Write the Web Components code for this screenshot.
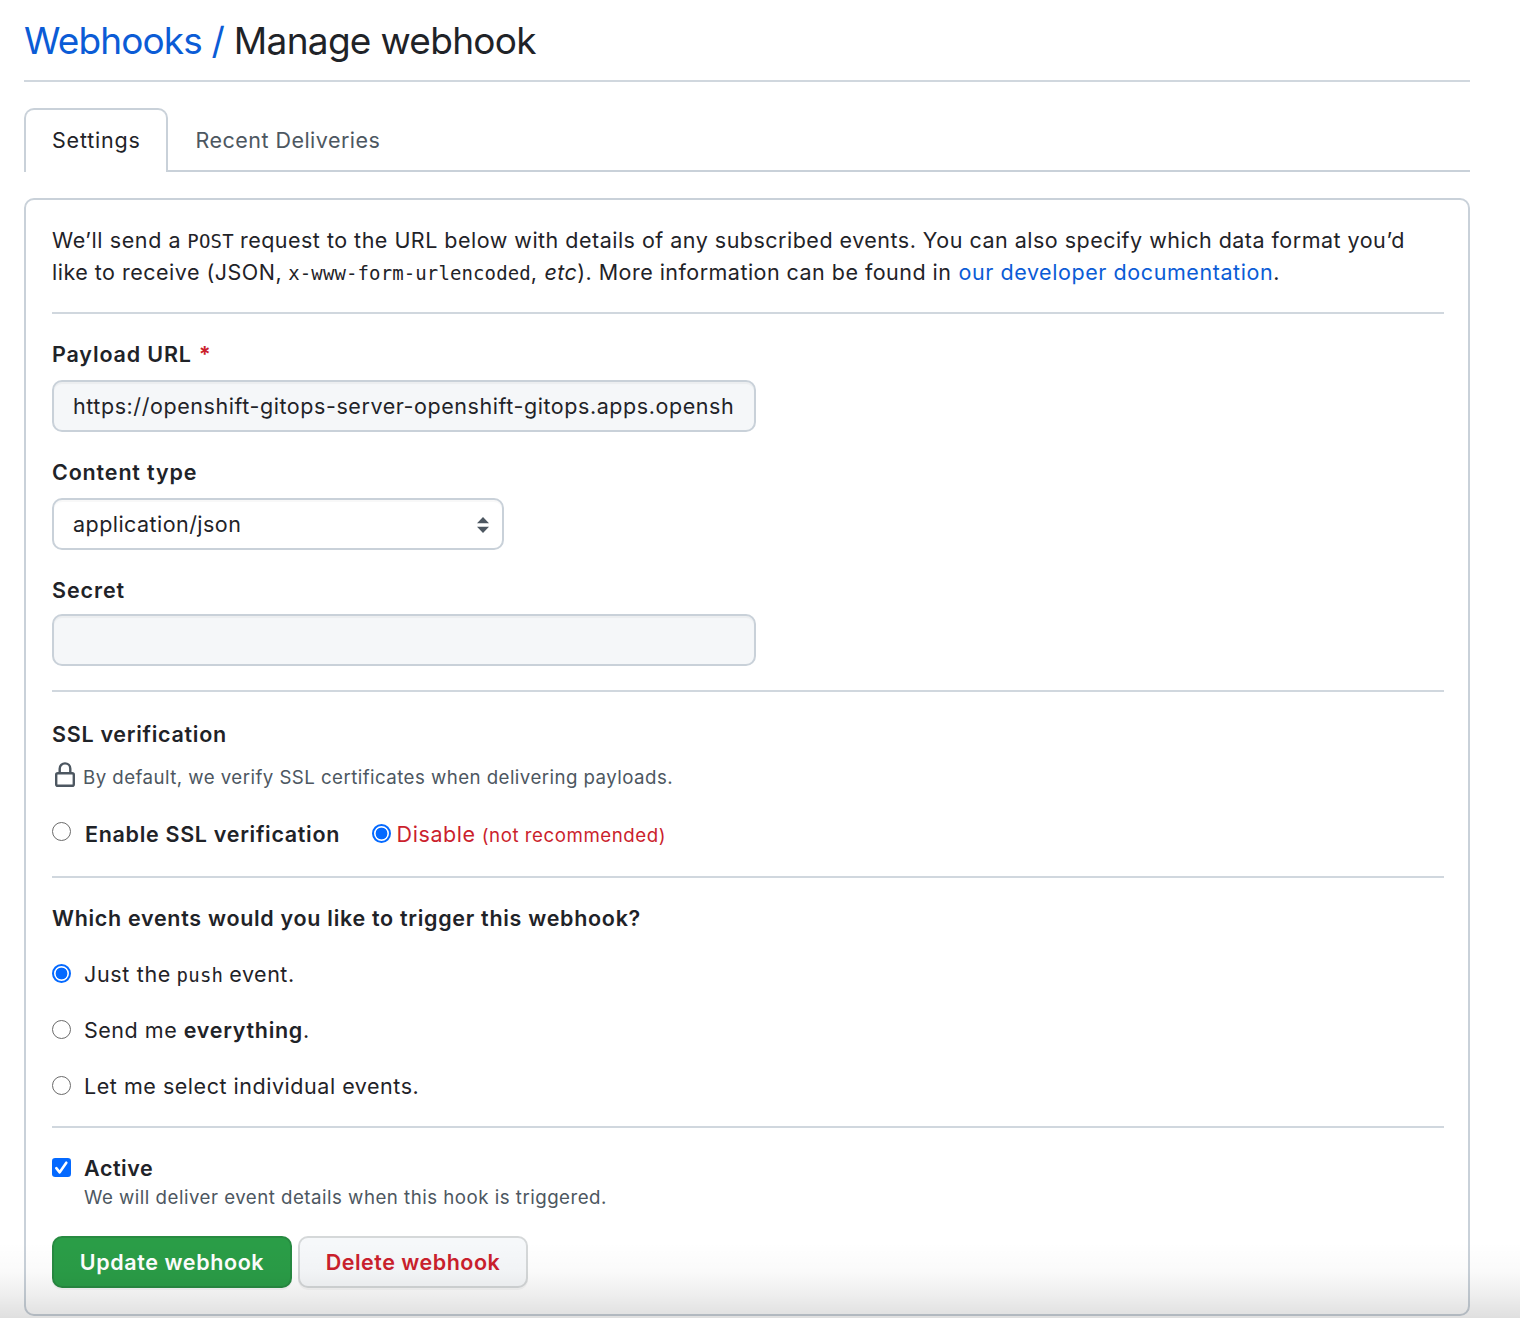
<!DOCTYPE html>
<html lang="en"><head><meta charset="utf-8"><title>Manage webhook</title>
<style>
html,body{margin:0;padding:0;background:#fff}
body{height:1318px;overflow:hidden;font:21.5px/32px Inter,"Liberation Sans",sans-serif;color:#1f2328;font-kerning:normal}
code{font:19px/1 "DejaVu Sans Mono",monospace}
a{color:#0b5cd6;text-decoration:none}
b{font-weight:600}
</style></head><body>
<webhook-page>
 <page-title><a slot="parent" href="#"><text-run track="-0.88">Webhooks /</text-run></a><text-run track="-0.7">Manage webhook</text-run></page-title>
 <tab-bar><tab-item selected><text-run track="0.79">Settings</text-run></tab-item><tab-item><text-run track="0.469">Recent Deliveries</text-run></tab-item></tab-bar>
 <settings-box>
  <intro-text>
   <div><text-run track="0.6">We’ll send a</text-run> <code><text-run track="0.2">POST</text-run></code> <text-run track="0.485">request to the URL below with details of any subscribed events. You can also specify which data format you’d</text-run></div>
   <div><text-run track="0.492">like to receive (JSON,</text-run> <code><text-run track="0.111">x-www-form-urlencoded</text-run></code>, <i style="margin-left:1.5px"><text-run track="0.389">etc</text-run></i><text-run track="0.465">). More information can be found in</text-run> <a href="#" style="margin-left:1px"><text-run track="0.57">our developer documentation</text-run></a>.</div>
  </intro-text>
  <rule-line></rule-line>
  <form-field style="--top:24px;--gap:10px"><text-run slot="label" track="0.85">Payload URL</text-run><span slot="label" style="color:#cb1f2d;font-weight:700;margin-left:7px">*</span><text-box><text-run track="0.566">https://openshift-gitops-server-openshift-gitops.apps.opensh</text-run></text-box></form-field>
  <form-field style="--top:24px;--gap:10px"><text-run slot="label" track="0.84">Content type</text-run><select-box><text-run track="0.45">application/json</text-run></select-box></form-field>
  <form-field style="--top:24px;--gap:8px"><text-run slot="label" track="0.9">Secret</text-run><text-box></text-box></form-field>
  <rule-line></rule-line>
  <form-field style="--top:26px;--gap:11px"><text-run slot="label" track="0.71">SSL verification</text-run><lock-note><text-run track="0.44">By default, we verify SSL certificates when delivering payloads.</text-run></lock-note></form-field>
  <ssl-choices>
   <radio-option style="--space:14px;--lift:-5px"><b><text-run track="0.69">Enable SSL verification</text-run></b></radio-option>
   <radio-option checked style="--space:6px;--drop:1px;color:#cb1f2d"><text-run track="0.581">Disable</text-run> <small style="font-size:18.7px"><text-run track="0.538">(not recommended)</text-run></small></radio-option>
  </ssl-choices>
  <rule-line></rule-line>
  <form-field style="--top:24px;--gap:24px"><text-run slot="label" track="0.7">Which events would you like to trigger this webhook?</text-run>
   <option-list>
   <radio-option checked><text-run track="0.66">Just the</text-run> <code style="margin-left:-.5px"><text-run track="0.25">push</text-run></code> <text-run track="0.5">event.</text-run></radio-option>
   <radio-option><text-run track="0.52">Send me</text-run> <b style="margin-left:.5px"><text-run track="0.7">everything</text-run></b>.</radio-option>
   <radio-option><text-run track="0.53">Let me select individual events.</text-run></radio-option>
   </option-list></form-field>
  <rule-line></rule-line>
  <active-toggle><text-run track="0.56">Active</text-run><text-run slot="note" track="0.483">We will deliver event details when this hook is triggered.</text-run></active-toggle>
  <button-row><push-button primary style="width:240px"><text-run track="0.6">Update webhook</text-run></push-button><push-button style="width:230px"><text-run track="0.5">Delete webhook</text-run></push-button></button-row>
 </settings-box>
</webhook-page>
<script>
const define=(name,css,html)=>customElements.define(name,class extends HTMLElement{
 constructor(){super();this.attachShadow({mode:'open'}).innerHTML=`<style>:host{display:block;box-sizing:border-box}${css}</style>${html}`;}
});
define('webhook-page',`:host{height:1318px;padding:0 50px 0 24px;position:relative}
.fade{position:absolute;left:0;right:0;bottom:0;height:76px;pointer-events:none;background:linear-gradient(rgba(0,0,0,0),rgba(0,0,0,.018) 38%,rgba(0,0,0,.065) 70%,rgba(0,0,0,.125))}`,`<slot></slot><div class="fade"></div>`);
define('page-title',`:host{height:82px;border-bottom:2px solid #d0d7de;font-size:37px;line-height:81px}h1{font:inherit;margin:0;display:flex;gap:10px}`,`<h1><slot name="parent"></slot><slot></slot></h1>`);
define('tab-bar',`:host{display:flex;margin-top:26px;height:64px;box-shadow:inset 0 -2px #c9d1d9}`,`<slot></slot>`);
define('tab-item',`:host{padding:2px 28px 0 27.5px;line-height:60px;color:#4d5761}:host([selected]){width:144px;padding:0 0 0 26px;color:#1f2328;background:#fff;border:2px solid #c9d1d9;border-bottom:0;border-radius:10px 10px 0 0}`,`<slot></slot>`);
define('settings-box',`:host{margin-top:26px;height:1118px;border:2px solid #c9d1d9;border-radius:10px;padding:24px 24px 0 26px}`,`<slot></slot>`);
define('intro-text',`:host{height:64px;white-space:nowrap}`,`<slot></slot>`);
define('rule-line',`:host{height:2px;background:#d0d7de;margin-top:24px}`,``);
define('form-field',`:host{padding-top:var(--top)}.l{font-weight:600;height:32px;margin-bottom:var(--gap)}`,`<div class="l"><slot name="label"></slot></div><slot></slot>`);
define('text-box',`:host{width:704px;height:52px;border:2px solid #c9d1d9;border-radius:10px;background:#f5f7f9;box-shadow:inset 0 2px 1px rgba(27,31,36,.04);padding:0 19px;line-height:48px;white-space:nowrap}`,`<slot></slot>`);
define('select-box',`:host{display:flex;justify-content:space-between;align-items:center;width:452px;height:52px;border:2px solid #c9d1d9;border-radius:10px;background:#fff;box-shadow:inset 0 2px 1px rgba(27,31,36,.03);padding:0 13px 0 19px;line-height:48px}svg{display:block;margin-top:2px}`,`<slot></slot><svg width="12" height="16" viewBox="0 0 12 16" fill="#4d5761"><path d="M0 6.3 6 0l6 6.3zM0 9.7h12L6 16z"/></svg>`);
define('lock-note',`:host{display:flex;gap:8px;height:32px;font-size:18.7px;line-height:34px;color:#4d5761}svg{display:block;margin:1px 0 0 3px}`,`<svg width="20" height="26" viewBox="0 0 20 26" fill="none" stroke="#4d5761" stroke-width="2.4"><rect x="1.2" y="11.2" width="17.6" height="12.6" rx="1.6"/><path d="M4.7 11V6.7a5.3 5.3 0 0 1 10.6 0V11"/></svg><slot></slot>`);
define('ssl-choices',`:host{display:flex;gap:31.5px;margin-top:25px;padding-bottom:2px}`,`<slot></slot>`);
define('option-list',`:host{display:flex;flex-direction:column;gap:24px}`,`<slot></slot>`);
define('radio-option',`:host{display:flex;align-items:center;gap:var(--space,13px);height:32px;white-space:nowrap}i{box-sizing:border-box;flex:none;width:19px;height:19px;border:1.5px solid #6b6b6b;border-radius:50%;margin-top:var(--lift,-1px);background:#fff}span{padding-top:var(--drop,0)}:host([checked]) i{border:2px solid #0469ff;background:radial-gradient(circle,#0469ff 5.6px,#fff 6.2px)}`,`<i></i><span><slot></slot></span>`);
define('active-toggle',`:host{margin-top:24px;height:84px}.r{display:flex;gap:13px;align-items:center;height:32px;font-weight:600}.n{margin-left:32px;font-size:18.7px;line-height:28px;color:#4d5761}svg{display:block;margin-top:-1px}`,`<div class="r"><svg width="19" height="19" viewBox="0 0 19 19"><rect width="19" height="19" rx="3.2" fill="#0469ff"/><path d="m4.3 10.2 3.4 4.1 6.6-9.6" fill="none" stroke="#fff" stroke-width="2.6" stroke-linecap="round" stroke-linejoin="round"/></svg><slot></slot></div><div class="n"><slot name="note"></slot></div>`);
define('button-row',`:host{display:flex;gap:6px}`,`<slot></slot>`);
define('push-button',`:host{height:52px;border:2px solid rgba(27,31,36,.15);border-radius:10px;background:#f6f8fa;color:#cb1f2d;font-weight:600;line-height:48px;text-align:center;box-shadow:0 2px 0 rgba(27,31,36,.04)}:host([primary]){background:#2a9d47;color:#fff}`,`<slot></slot>`);
customElements.define('text-run',class extends HTMLElement{
 constructor(){super();this.attachShadow({mode:'open'}).innerHTML='<style>:host{display:inline}</style><slot></slot>';}
 connectedCallback(){this.style.letterSpacing=this.getAttribute('track')+'px';}
});
</script>
</body></html>
